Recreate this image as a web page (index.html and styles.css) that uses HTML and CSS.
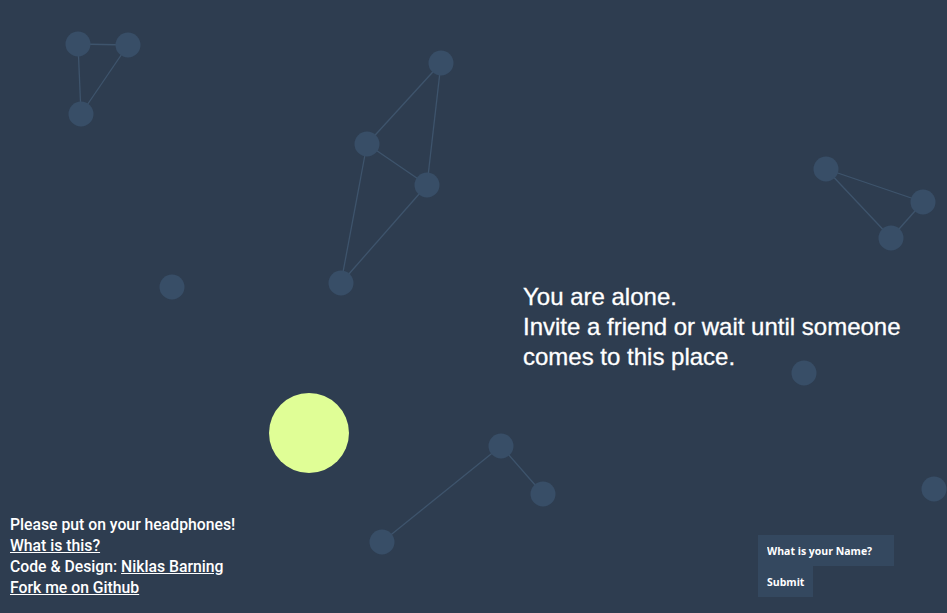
FILE: index.html
```html
<!DOCTYPE html>
<html>
<head>
<meta charset="utf-8">
<link rel="stylesheet" href="styles.css">
</head>
<body>
<div class="stage">
  <svg class="canvas" width="947" height="613" viewBox="0 0 947 613">
    <g class="links">
      <line x1="78" y1="44" x2="128" y2="45"/>
      <line x1="78" y1="44" x2="81" y2="114"/>
      <line x1="128" y1="45" x2="81" y2="114"/>
      <line x1="441" y1="63" x2="367" y2="144"/>
      <line x1="441" y1="63" x2="427" y2="185"/>
      <line x1="367" y1="144" x2="427" y2="185"/>
      <line x1="367" y1="144" x2="341" y2="283"/>
      <line x1="427" y1="185" x2="341" y2="283"/>
      <line x1="826" y1="169" x2="923" y2="202"/>
      <line x1="826" y1="169" x2="891" y2="238"/>
      <line x1="923" y1="202" x2="891" y2="238"/>
      <line x1="501" y1="446" x2="543" y2="494"/>
      <line x1="501" y1="446" x2="382" y2="542"/>
    </g>
    <g class="nodes">
      <circle cx="78" cy="44" r="12.5"/>
      <circle cx="128" cy="45" r="12.5"/>
      <circle cx="81" cy="114" r="12.5"/>
      <circle cx="441" cy="63" r="12.5"/>
      <circle cx="367" cy="144" r="12.5"/>
      <circle cx="427" cy="185" r="12.5"/>
      <circle cx="341" cy="283" r="12.5"/>
      <circle cx="172" cy="287" r="12.5"/>
      <circle cx="826" cy="169" r="12.5"/>
      <circle cx="923" cy="202" r="12.5"/>
      <circle cx="891" cy="238" r="12.5"/>
      <circle cx="804" cy="373" r="12.5"/>
      <circle cx="501" cy="446" r="12.5"/>
      <circle cx="543" cy="494" r="12.5"/>
      <circle cx="382" cy="542" r="12.5"/>
      <circle cx="934" cy="489" r="12.5"/>
    </g>
    <circle class="me" cx="309" cy="433" r="40"/>
  </svg>

  <div class="message">You are alone.<br>Invite a friend or wait until someone<br>comes to this place.</div>

  <div class="info">
    <div>Please put on your headphones!</div>
    <div><a href="#">What is this?</a></div>
    <div>Code &amp; Design: <a href="#">Niklas Barning</a></div>
    <div><a href="#">Fork me on Github</a></div>
  </div>

  <form class="name-form">
    <input class="name-input" type="text" placeholder="What is your Name?">
    <button class="submit" type="button">Submit</button>
  </form>
</div>
</body>
</html>
```

FILE: styles.css
```css
html, body {
  margin: 0;
  padding: 0;
  width: 947px;
  height: 613px;
  overflow: hidden;
  background: #2e3d50;
}

.stage {
  position: relative;
  width: 947px;
  height: 613px;
}

.canvas {
  position: absolute;
  left: 0;
  top: 0;
  display: block;
}

.links line {
  stroke: #3e546c;
  stroke-width: 1.3;
}

.nodes circle {
  fill: #384e67;
}

.me {
  fill: #e0fe96;
}

.message {
  position: absolute;
  left: 523px;
  top: 282px;
  font-family: "Liberation Sans", Arial, sans-serif;
  font-size: 24px;
  line-height: 30px;
  color: #ffffff;
  -webkit-text-stroke: 0.3px #ffffff;
}

.info {
  position: absolute;
  left: 10px;
  top: 514px;
  font-family: Roboto, "Noto Sans", sans-serif;
  font-weight: 500;
  font-size: 15.75px;
  line-height: 21px;
  color: #ffffff;
}

.info a {
  color: #ffffff;
  text-decoration: underline;
}

.name-form {
  position: absolute;
  left: 758px;
  top: 535px;
  margin: 0;
  display: flex;
  flex-direction: column;
  align-items: flex-start;
}

.name-input,
.submit {
  border: none;
  outline: none;
  margin: 0;
  background: #34485f;
  color: #ffffff;
  font-family: "Open Sans", "DejaVu Sans", sans-serif;
  font-weight: bold;
  font-size: 10.5px;
  height: 31px;
  padding: 0 9px;
  box-sizing: border-box;
}

.name-input {
  width: 136px;
}

.name-input::placeholder {
  color: #ffffff;
  opacity: 1;
}

.submit {
  width: 55px;
  text-align: left;
}
```
